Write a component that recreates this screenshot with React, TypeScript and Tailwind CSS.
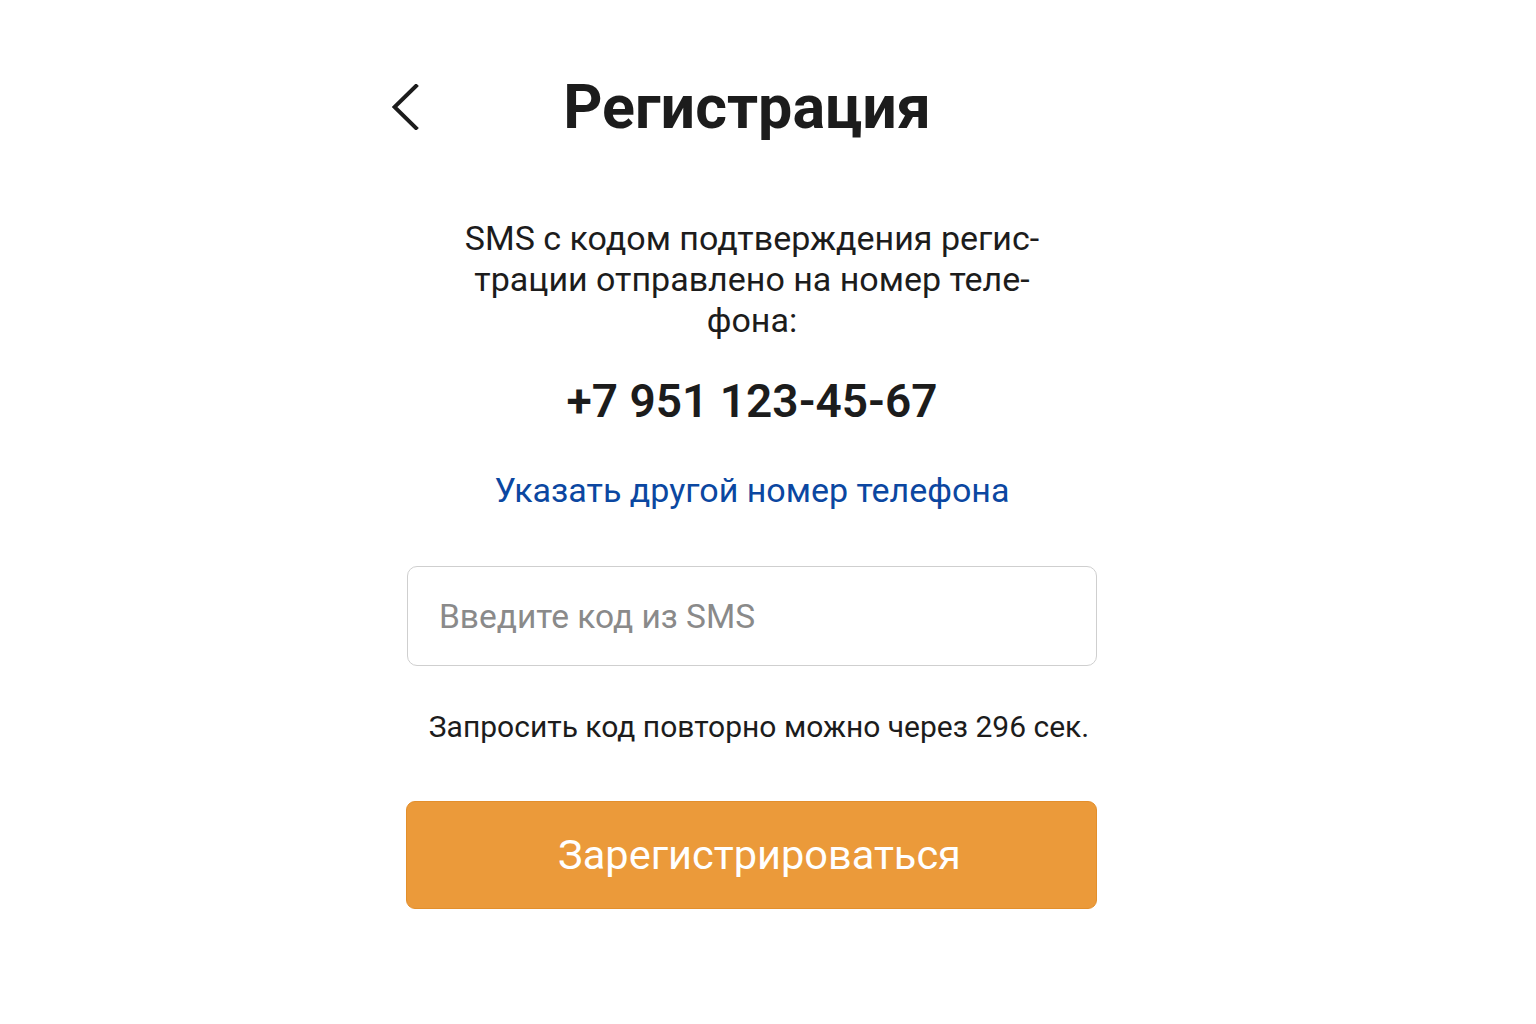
export default function App() {
  return (
    <div className="min-h-screen bg-white font-['Roboto',sans-serif] text-[#1c1c1c]">
      <div className="ml-[392px] flex w-[720px] flex-col pt-[69px]">
        {/* Header */}
        <div className="flex h-[76px] items-center">
          <button className="flex w-[30px] items-center justify-start">
            <svg width="30" height="46" viewBox="0 0 30 46" fill="none">
              <path d="M24 2 L2.5 23 L24 44" stroke="#1c1c1c" strokeWidth="4" strokeLinecap="square" strokeLinejoin="miter" />
            </svg>
          </button>
          <h1 className="flex-1 text-center text-[61px] leading-[76px] font-bold">Регистрация</h1>
          <div className="w-[40px]" />
        </div>

        {/* Message */}
        <p className="mt-[73px] text-center text-[34px] leading-[41px]">
          SMS с кодом подтверждения регис-
          <br />
          трации отправлено на номер теле-
          <br />
          фона:
        </p>

        <div className="mt-[34px] text-center text-[46px] leading-[52px] font-semibold">+7 951 123-45-67</div>

        <a href="#" className="mt-[43px] text-center text-[34px] leading-[40px] text-[#0b47a1]">
          Указать другой номер телефона
        </a>

        {/* Code input */}
        <div className="mt-[56px] ml-[15px] w-[690px]">
          <input
            type="text"
            placeholder="Введите код из SMS"
            className="h-[100px] w-full rounded-[10px] border-[1.5px] border-[#cfcfcf] bg-white px-[31px] text-[33.5px] text-[#1c1c1c] placeholder:text-[#8a8a8a] focus:outline-none"
          />
        </div>

        <p className="mt-[43px] pl-[14px] text-center text-[30px] leading-[36px]">Запросить код повторно можно через 296 сек.</p>

        <button className="mt-[56px] ml-[14px] h-[108px] w-[691px] rounded-[9px] border border-[#e38f2c] bg-[#eb9a3a] pl-4 text-[41.5px] text-white">
          Зарегистрироваться
        </button>
      </div>
    </div>
  );
}
